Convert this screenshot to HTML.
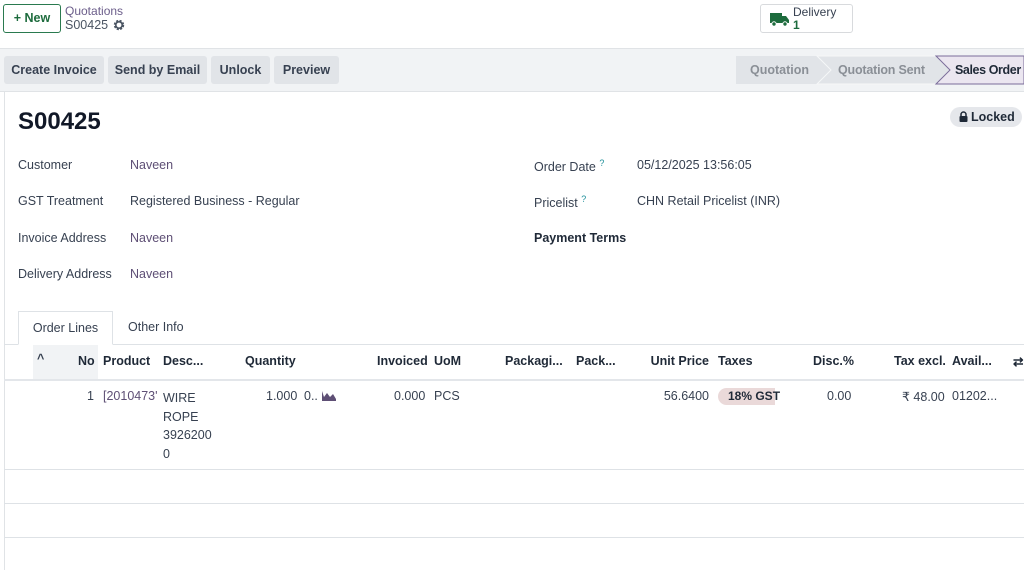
<!DOCTYPE html><html><head><style>
*{box-sizing:border-box;margin:0;padding:0}
body{width:1024px;height:570px;overflow:hidden;font-family:"Liberation Sans",sans-serif;font-size:12.5px;color:#374151;background:#fff;position:relative}
.a{position:absolute;white-space:nowrap}
.btn{position:absolute;top:56px;height:28px;background:#e1e4e8;border-radius:3px;font-weight:bold;color:#374151;line-height:28px;text-align:center;font-size:12.5px}
.lbl{color:#374151}
.lnk{color:#5e4f75}
.th{position:absolute;top:354px;font-weight:bold;color:#1f2937}
.td{position:absolute;top:389px}
</style></head><body>
<div class="a" style="left:3px;top:4px;width:58px;height:29px;border:1px solid #2a7a4f;border-radius:3px;color:#1d6b3d;font-weight:bold;line-height:27px;text-align:center">+ New</div>
<div class="a" style="left:65px;top:4px;font-size:12px;color:#6b5d8a">Quotations</div>
<div class="a" style="left:65px;top:18px;font-size:12.5px;color:#4b5563">S00425</div>
<svg class="a" style="left:113px;top:19px" width="12" height="12" viewBox="0 0 12 12"><circle cx="6" cy="6" r="4" fill="none" stroke="#4b5563" stroke-width="2.4" stroke-dasharray="2 1.2"/><circle cx="6" cy="6" r="3.2" fill="none" stroke="#4b5563" stroke-width="1.6"/></svg>
<div class="a" style="left:760px;top:4px;width:93px;height:29px;border:1px solid #d8dadd;border-radius:3px"></div>
<svg class="a" style="left:770px;top:12px" width="20" height="15" viewBox="0 0 20 15"><rect x="0" y="1" width="12" height="10" fill="#1d6b3d"/><path d="M12 4h4l3 4v3h-7z" fill="#1d6b3d"/><circle cx="4" cy="12" r="2.2" fill="#1d6b3d" stroke="#fff"/><circle cx="15" cy="12" r="2.2" fill="#1d6b3d" stroke="#fff"/></svg>
<div class="a" style="left:793px;top:6px;font-size:12px;line-height:13px">Delivery<br><span style="color:#1d6b3d;font-weight:bold">1</span></div>
<div class="a" style="left:0;top:48px;width:1024px;height:44px;background:#f1f3f5;border-top:1px solid #e0e3e6;border-bottom:1px solid #e0e3e6"></div>
<div class="btn" style="left:4px;width:100px">Create Invoice</div>
<div class="btn" style="left:108px;width:99px">Send by Email</div>
<div class="btn" style="left:211px;width:59px">Unlock</div>
<div class="btn" style="left:274px;width:65px">Preview</div>
<svg class="a" style="left:733px;top:55px" width="291" height="30"><path d="M3 1h81l14 14-14 14H3z" fill="#e1e4e8"/><path d="M84 1h119l14 14-14 14H84l14-14z" fill="#e1e4e8" stroke="#f6f7f8"/><path d="M203 1h88v28h-88l14-14z" fill="#ebe6f0" stroke="#7b6c9a"/></svg>
<div class="a" style="left:750px;top:63px;color:#8a8f96;font-weight:bold">Quotation</div>
<div class="a" style="left:838px;top:63px;color:#8a8f96;font-weight:bold;letter-spacing:-0.2px">Quotation Sent</div>
<div class="a" style="left:955px;top:63px;color:#1f2937;font-weight:bold;letter-spacing:-0.4px">Sales Order</div>
<div class="a" style="left:4px;top:92px;width:1020px;height:478px;border-left:1px solid #e0e3e6"></div>
<div class="a" style="left:18px;top:108px;font-size:24px;font-weight:bold;color:#111827">S00425</div>
<div class="a" style="left:950px;top:107px;width:72px;height:20px;border-radius:10px;background:#e5e7eb;font-weight:bold;line-height:20px;color:#1f2937;padding-left:21px">Locked</div>
<svg class="a" style="left:959px;top:111px" width="9" height="11" viewBox="0 0 9 11"><path d="M2 5V3.5a2.5 2.5 0 0 1 5 0V5" fill="none" stroke="#1f2937" stroke-width="1.5"/><rect x="0.5" y="5" width="8" height="6" rx="1" fill="#1f2937"/></svg>
<div class="a lbl" style="left:18px;top:158px">Customer</div><div class="a lnk" style="left:130px;top:158px">Naveen</div>
<div class="a lbl" style="left:18px;top:194px">GST Treatment</div><div class="a" style="left:130px;top:194px">Registered Business - Regular</div>
<div class="a lbl" style="left:18px;top:231px">Invoice Address</div><div class="a lnk" style="left:130px;top:231px">Naveen</div>
<div class="a lbl" style="left:18px;top:267px">Delivery Address</div><div class="a lnk" style="left:130px;top:267px">Naveen</div>
<div class="a lbl" style="left:534px;top:158px">Order Date <sup style="color:#1f8f9a;font-size:9px">?</sup></div><div class="a" style="left:637px;top:158px">05/12/2025 13:56:05</div>
<div class="a lbl" style="left:534px;top:194px">Pricelist <sup style="color:#1f8f9a;font-size:9px">?</sup></div><div class="a" style="left:637px;top:194px">CHN Retail Pricelist (INR)</div>
<div class="a" style="left:534px;top:231px;font-weight:bold;color:#1f2937">Payment Terms</div>
<div class="a" style="left:4px;top:344px;width:1020px;border-top:1px solid #dee2e6"></div>
<div class="a" style="left:18px;top:311px;width:95px;height:34px;border:1px solid #dee2e6;border-bottom:1px solid #fff;background:#fff;text-align:center;line-height:32px">Order Lines</div>
<div class="a" style="left:128px;top:320px">Other Info</div>
<div class="a" style="left:33px;top:345px;width:65px;height:35px;background:#f1f3f5"></div>
<div class="a" style="left:37px;top:352px;font-weight:bold">^</div>
<div class="th" style="left:78px">No</div><div class="th" style="left:103px">Product</div><div class="th" style="left:163px">Desc...</div><div class="th" style="left:245px">Quantity</div><div class="th" style="left:377px">Invoiced</div><div class="th" style="left:434px">UoM</div><div class="th" style="left:505px">Packagi...</div><div class="th" style="left:576px">Pack...</div><div class="th" style="right:315px">Unit Price</div><div class="th" style="left:718px">Taxes</div><div class="th" style="left:813px">Disc.%</div><div class="th" style="left:894px">Tax excl.</div><div class="th" style="left:952px">Avail...</div><div class="th" style="left:1013px">⇄</div>
<div class="a" style="left:4px;top:379px;width:1020px;border-top:2px solid #e3e6ea"></div>
<div class="td" style="left:87px">1</div><div class="td lnk" style="left:103px;width:57px;overflow:hidden">[2010473'</div>
<div class="td" style="left:163px;line-height:18.5px">WIRE<br>ROPE<br>3926200<br>0</div>
<div class="td" style="left:266px">1.000</div><div class="td" style="left:304px">0..</div>
<svg class="a" style="left:322px;top:391px" width="14" height="10"><path d="M0 0v10h14V8l-3-5-3 3-3-4-3 4z" fill="#5e4f75"/></svg>
<div class="td" style="left:394px">0.000</div><div class="td" style="left:434px">PCS</div>
<div class="td" style="right:315px">56.6400</div>
<div class="a" style="left:718px;top:388px;width:57px;height:17px;background:#ead9d9;border-radius:9px 0 0 9px;font-weight:bold;font-size:12px;line-height:17px;padding-left:10px;color:#1f2937">18% GST</div>
<div class="td" style="left:827px">0.00</div><div class="td" style="left:902px">₹ 48.00</div><div class="td" style="left:952px">01202...</div>
<div class="a" style="left:4px;top:469px;width:1020px;border-top:1px solid #dee2e6"></div>
<div class="a" style="left:4px;top:503px;width:1020px;border-top:1px solid #dee2e6"></div>
<div class="a" style="left:4px;top:537px;width:1020px;border-top:1px solid #dee2e6"></div>
</body></html>
